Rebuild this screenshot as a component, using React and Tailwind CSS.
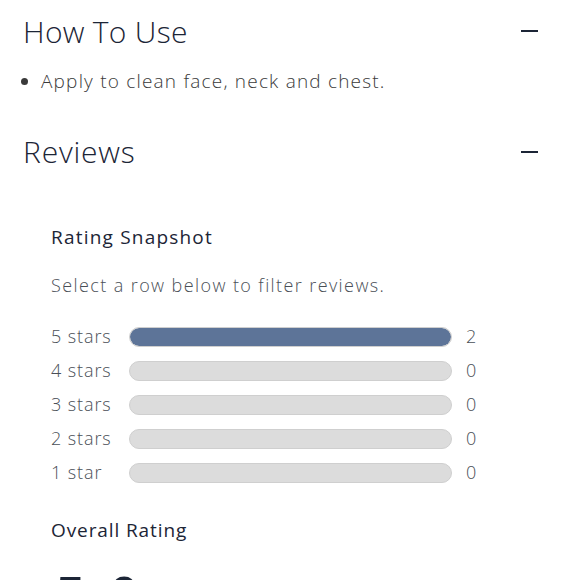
import React from 'react';

const rows = [
  { label: '5 stars', count: 2, pct: 100 },
  { label: '4 stars', count: 0, pct: 0 },
  { label: '3 stars', count: 0, pct: 0 },
  { label: '2 stars', count: 0, pct: 0 },
  { label: '1 star', count: 0, pct: 0 },
];

const Minus = () => <span className="block w-[17px] h-[2px] bg-[#1c2536]" />;

export default function App() {
  return (
    <div className="w-[579px] h-[580px] overflow-hidden bg-white font-['Open_Sans',sans-serif] text-[#1c2536]">
      {/* How to use */}
      <div className="pl-[23px] pr-[41px] pt-[12px]">
        <div className="flex items-center justify-between h-[38px]">
          <h2 className="text-[30px] font-light tracking-[0.3px]">How To Use</h2>
          <Minus />
        </div>
        <ul className="mt-[17px] pl-[18px] list-disc text-[19px] font-light tracking-[1.2px] text-[#3a3a3a]">
          <li>Apply to clean face, neck and chest.</li>
        </ul>
      </div>

      {/* Reviews */}
      <div className="pl-[23px] pr-[41px] mt-[37px]">
        <div className="flex items-center justify-between h-[38px]">
          <h2 className="text-[30px] font-light tracking-[0.8px]">Reviews</h2>
          <Minus />
        </div>

        <div className="pl-[28px] mt-[54px]">
          <h3 className="text-[19px] leading-[24px] tracking-[1.2px]">Rating Snapshot</h3>
          <p className="mt-[24px] text-[18px] leading-[24px] font-light tracking-[1.4px] text-[#4a4f57]">
            Select a row below to filter reviews.
          </p>

          <div className="mt-[30px] flex flex-col gap-[14px]">
            {rows.map((r) => (
              <div key={r.label} className="flex items-center h-[20px] text-[18px] font-light tracking-[0.9px] text-[#4a4f57]">
                <span className="w-[78px]">{r.label}</span>
                <div className="w-[323px] h-[20px] rounded-full bg-[#dcdcdc] border border-[#cfcfcf] overflow-hidden">
                  <div className="h-full bg-[#5d7498] rounded-full" style={{ width: `${r.pct}%` }} />
                </div>
                <span className="ml-[14px]">{r.count}</span>
              </div>
            ))}
          </div>

          <h3 className="mt-[35px] text-[19px] leading-[24px] tracking-[0.9px]">Overall Rating</h3>
          <div className="mt-[26px] pl-[4px] text-[54px] leading-none font-semibold tracking-[4px] text-[#1c2536]">5.0</div>
        </div>
      </div>
    </div>
  );
}
